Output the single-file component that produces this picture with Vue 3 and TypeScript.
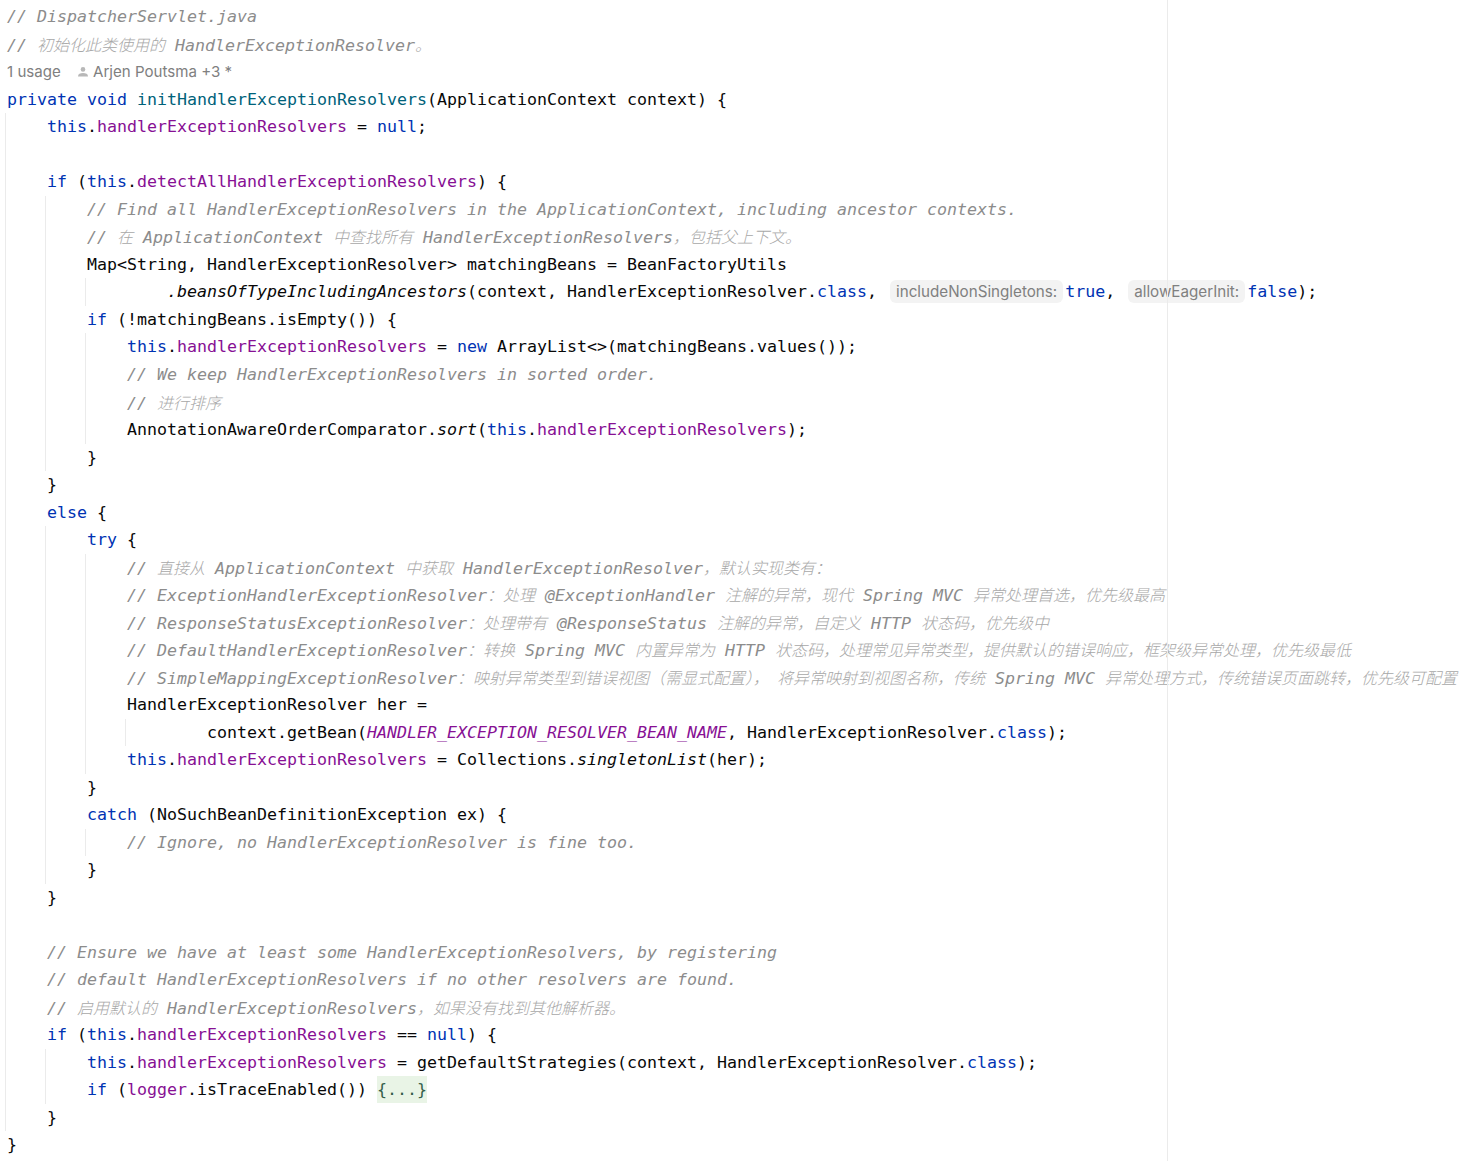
<script setup lang="ts">
</script>

<template>
  <div class="page">
    <div class="margin-line"></div>
    <div class="ln"><span class="c">// DispatcherServlet.java</span></div>
    <div class="ln"><span class="c">// <span class="z">初始化此类使用的</span> HandlerExceptionResolver<span class="z">。</span></span></div>
    <div class="ln meta">
      <span class="usage">1 usage</span>
      <svg class="person" width="12" height="12" viewBox="0 0 12 12"><circle cx="6" cy="3.4" r="2.3" /><path d="M1 10.4c0-2.4 2.2-3.4 5-3.4s5 1 5 3.4z" /></svg>
      <span>Arjen Poutsma +3 *</span>
    </div>
    <div class="ln"><span class="k">private void</span> <span class="m">initHandlerExceptionResolvers</span>(ApplicationContext context) {</div>
    <div class="block">
      <div class="ln"><span class="k">this</span>.<span class="f">handlerExceptionResolvers</span> = <span class="k">null</span>;</div>
      <div class="ln"></div>
      <div class="ln"><span class="k">if</span> (<span class="k">this</span>.<span class="f">detectAllHandlerExceptionResolvers</span>) {</div>
      <div class="block">
        <div class="ln"><span class="c">// Find all HandlerExceptionResolvers in the ApplicationContext, including ancestor contexts.</span></div>
        <div class="ln"><span class="c">// <span class="z">在</span> ApplicationContext <span class="z">中查找所有</span> HandlerExceptionResolvers<span class="z">，包括父上下文。</span></span></div>
        <div class="ln">Map&lt;String, HandlerExceptionResolver&gt; matchingBeans = BeanFactoryUtils</div>
        <div class="block cont">
          <div class="ln"><span class="i">.beansOfTypeIncludingAncestors</span>(context, HandlerExceptionResolver.<span class="k">class</span>,<span class="hint first">includeNonSingletons:</span><span class="k">true</span>,<span class="hint second">allowEagerInit:</span><span class="k">false</span>);</div>
        </div>
        <div class="ln"><span class="k">if</span> (!matchingBeans.isEmpty()) {</div>
        <div class="block">
          <div class="ln"><span class="k">this</span>.<span class="f">handlerExceptionResolvers</span> = <span class="k">new</span> ArrayList&lt;&gt;(matchingBeans.values());</div>
          <div class="ln"><span class="c">// We keep HandlerExceptionResolvers in sorted order.</span></div>
          <div class="ln"><span class="c">// <span class="z">进行排序</span></span></div>
          <div class="ln">AnnotationAwareOrderComparator.<span class="i">sort</span>(<span class="k">this</span>.<span class="f">handlerExceptionResolvers</span>);</div>
        </div>
        <div class="ln">}</div>
      </div>
      <div class="ln">}</div>
      <div class="ln"><span class="k">else</span> {</div>
      <div class="block">
        <div class="ln"><span class="k">try</span> {</div>
        <div class="block">
          <div class="ln"><span class="c">// <span class="z">直接从</span> ApplicationContext <span class="z">中获取</span> HandlerExceptionResolver<span class="z">，默认实现类有：</span></span></div>
          <div class="ln"><span class="c">// ExceptionHandlerExceptionResolver<span class="z">：处理</span> @ExceptionHandler <span class="z">注解的异常，现代</span> Spring MVC <span class="z">异常处理首选，优先级最高</span></span></div>
          <div class="ln"><span class="c">// ResponseStatusExceptionResolver<span class="z">：处理带有</span> @ResponseStatus <span class="z">注解的异常，自定义</span> HTTP <span class="z">状态码，优先级中</span></span></div>
          <div class="ln"><span class="c">// DefaultHandlerExceptionResolver<span class="z">：转换</span> Spring MVC <span class="z">内置异常为</span> HTTP <span class="z">状态码，处理常见异常类型，提供默认的错误响应，框架级异常处理，优先级最低</span></span></div>
          <div class="ln"><span class="c">// SimpleMappingExceptionResolver<span class="z">：映射异常类型到错误视图（需显式配置）<span class="gap">，</span>将异常映射到视图名称，传统</span> Spring MVC <span class="z">异常处理方式，传统错误页面跳转，优先级可配置</span></span></div>
          <div class="ln">HandlerExceptionResolver her =</div>
          <div class="block cont">
            <div class="ln">context.getBean(<span class="i f">HANDLER_EXCEPTION_RESOLVER_BEAN_NAME</span>, HandlerExceptionResolver.<span class="k">class</span>);</div>
          </div>
          <div class="ln"><span class="k">this</span>.<span class="f">handlerExceptionResolvers</span> = Collections.<span class="i">singletonList</span>(her);</div>
        </div>
        <div class="ln">}</div>
        <div class="ln"><span class="k">catch</span> (NoSuchBeanDefinitionException ex) {</div>
        <div class="block">
          <div class="ln"><span class="c">// Ignore, no HandlerExceptionResolver is fine too.</span></div>
        </div>
        <div class="ln">}</div>
      </div>
      <div class="ln">}</div>
      <div class="ln"></div>
      <div class="ln"><span class="c">// Ensure we have at least some HandlerExceptionResolvers, by registering</span></div>
      <div class="ln"><span class="c">// default HandlerExceptionResolvers if no other resolvers are found.</span></div>
      <div class="ln"><span class="c">// <span class="z">启用默认的</span> HandlerExceptionResolvers<span class="z">，如果没有找到其他解析器。</span></span></div>
      <div class="ln"><span class="k">if</span> (<span class="k">this</span>.<span class="f">handlerExceptionResolvers</span> == <span class="k">null</span>) {</div>
      <div class="block">
        <div class="ln"><span class="k">this</span>.<span class="f">handlerExceptionResolvers</span> = getDefaultStrategies(context, HandlerExceptionResolver.<span class="k">class</span>);</div>
        <div class="ln"><span class="k">if</span> (<span class="f">logger</span>.isTraceEnabled()) <span class="fold">{...}</span></div>
      </div>
      <div class="ln">}</div>
    </div>
    <div class="ln">}</div>
  </div>
</template>

<style scoped>
.page {
  position: relative;
  height: 1161px;
  box-sizing: border-box;
  padding: 3.3px 0 0 7px;
  overflow: hidden;
  background: #ffffff;
  color: #080808;
  font-family: "DejaVu Sans Mono", "Liberation Mono", "Noto Sans CJK SC", monospace;
  font-size: 16.61px;
}
.margin-line {
  position: absolute;
  left: 1167px;
  top: 0;
  bottom: 0;
  width: 1px;
  background: #ebebeb;
}
.ln {
  height: 27.525px;
  line-height: 27.525px;
  white-space: pre;
}
.block {
  margin-left: -2px;
  padding-left: 41px;
  border-left: 1px solid #ebebeb;
}
.block.cont {
  padding-left: 81px;
}
.k { color: #0033b3; }
.f { color: #871094; }
.m { color: #00627a; }
.i { font-style: italic; }
.c { color: #8c8c8c; font-style: italic; }
.z {
  font-family: "Noto Sans CJK SC", sans-serif;
  font-size: 16px;
  font-weight: 300;
  color: #a8a8a8;
}
.gap { margin-right: 8px; }
.meta {
  display: flex;
  align-items: center;
  font-family: Inter, "Liberation Sans", sans-serif;
  font-size: 15.1px;
  color: #808080;
}
.usage { width: 70px; }
.person {
  margin-right: 4px;
  fill: #b8b8b8;
}
.hint {
  display: inline-block;
  height: 23px;
  line-height: 23px;
  box-sizing: border-box;
  vertical-align: baseline;
  border-radius: 6px;
  background: #f3f3f3;
  color: #808080;
  font-family: Inter, "Liberation Sans", sans-serif;
  font-size: 15.2px;
  padding: 0 6px;
}
.hint.first { margin: 0 2px 0 13px; }
.hint.second { margin: 0 2px 0 13px; }
.fold {
  display: inline-block;
  height: 27px;
  background: #e9f4e6;
  color: #355e4a;
}
</style>
